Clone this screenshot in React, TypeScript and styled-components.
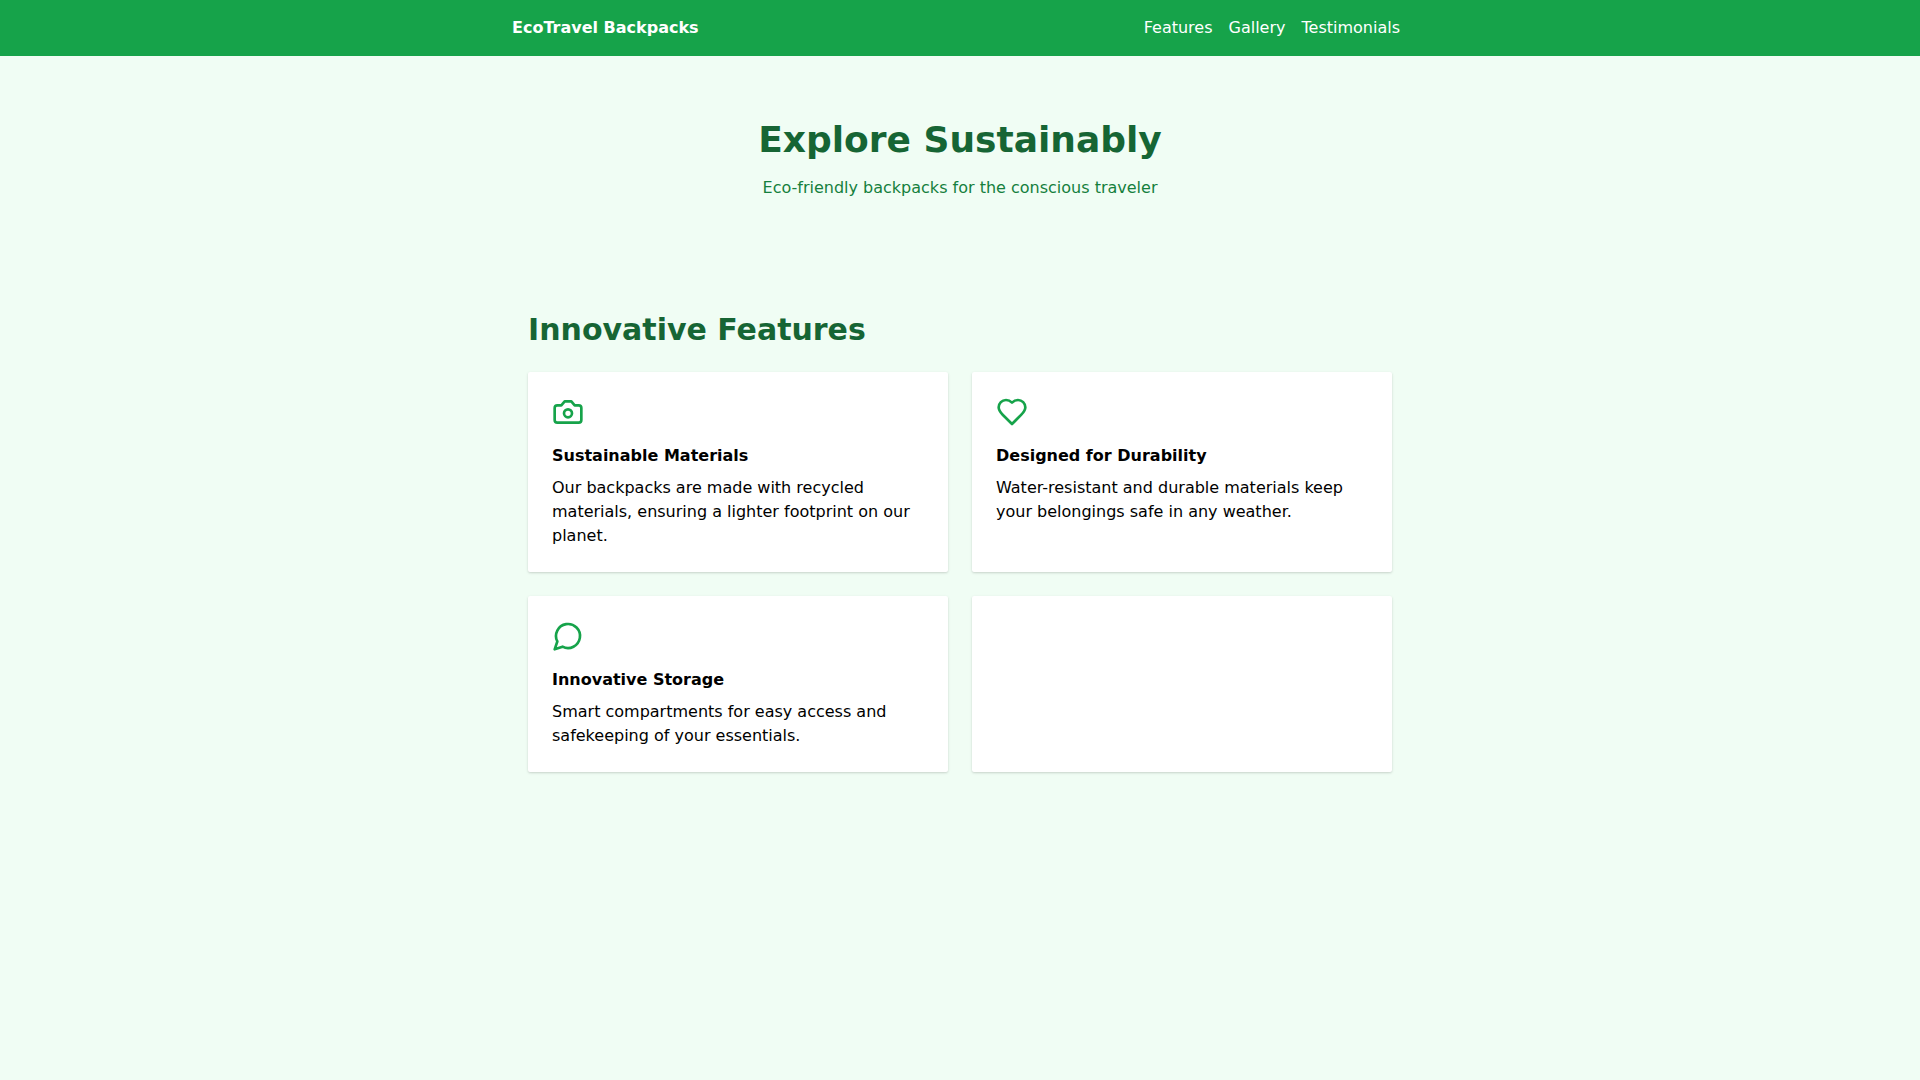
import styled, { createGlobalStyle } from 'styled-components';

const GlobalStyle = createGlobalStyle`
  * {
    box-sizing: border-box;
  }
  body {
    margin: 0;
    background: #f0fdf4;
    font-family: 'DejaVu Sans', sans-serif;
    font-size: 16px;
    line-height: 24px;
    color: #000;
  }
`;

const Page = styled.div`
  min-height: 100vh;
`;

const TopBar = styled.nav`
  height: 56px;
  background: #16a34a;
  color: #fff;
`;

const TopBarInner = styled.div`
  width: 896px;
  height: 100%;
  margin: 0 auto;
  display: flex;
  justify-content: space-between;
  align-items: center;
`;

const Brand = styled.a`
  font-weight: 700;
`;

const NavLinks = styled.div`
  display: flex;
`;

const NavLink = styled.a`
  padding: 0 8px;
`;

const Hero = styled.header`
  padding: 64px 0;
  text-align: center;
  h1 {
    margin: 0 0 16px;
    font-size: 36px;
    line-height: 40px;
    font-weight: 700;
    color: #166534;
  }
  p {
    margin: 0;
    color: #15803d;
  }
`;

const Features = styled.section`
  width: 864px;
  margin: 0 auto;
  padding: 48px 0;
  h2 {
    margin: 0 0 24px;
    font-size: 30px;
    line-height: 36px;
    font-weight: 700;
    color: #166534;
  }
`;

const CardGrid = styled.div`
  display: grid;
  grid-template-columns: 1fr 1fr;
  gap: 24px;
`;

const Card = styled.article`
  padding: 24px;
  background: #fff;
  border-radius: 2px;
  box-shadow: 0 1px 3px rgba(0, 0, 0, 0.12), 0 1px 2px rgba(0, 0, 0, 0.06);
  h3 {
    margin: 0 0 8px;
    font-size: 16px;
    line-height: 24px;
    font-weight: 700;
  }
  p {
    margin: 0;
  }
`;

const IconSvg = styled.svg`
  display: block;
  width: 32px;
  height: 32px;
  margin-bottom: 16px;
  fill: none;
  stroke: #16a34a;
  stroke-width: 2;
  stroke-linecap: round;
  stroke-linejoin: round;
`;

const CameraIcon = () => (
  <IconSvg viewBox="0 0 24 24">
    <path d="M14.5 4h-5L7 7H4a2 2 0 0 0-2 2v9a2 2 0 0 0 2 2h16a2 2 0 0 0 2-2V9a2 2 0 0 0-2-2h-3l-2.5-3z" />
    <circle cx="12" cy="13" r="3" />
  </IconSvg>
);

const HeartIcon = () => (
  <IconSvg viewBox="0 0 24 24">
    <path d="M19 14c1.49-1.46 3-3.21 3-5.5A5.5 5.5 0 0 0 16.5 3c-1.76 0-3 .5-4.5 2-1.5-1.5-2.74-2-4.5-2A5.5 5.5 0 0 0 2 8.5c0 2.3 1.5 4.05 3 5.5l7 7Z" />
  </IconSvg>
);

const BubbleIcon = () => (
  <IconSvg viewBox="0 0 24 24">
    <path d="M7.9 20A9 9 0 1 0 4 16.1L2 22Z" />
  </IconSvg>
);

const features = [
  {
    icon: <CameraIcon />,
    title: 'Sustainable Materials',
    text: 'Our backpacks are made with recycled materials, ensuring a lighter footprint on our planet.',
  },
  {
    icon: <HeartIcon />,
    title: 'Designed for Durability',
    text: 'Water-resistant and durable materials keep your belongings safe in any weather.',
  },
  {
    icon: <BubbleIcon />,
    title: 'Innovative Storage',
    text: 'Smart compartments for easy access and safekeeping of your essentials.',
  },
];

export default function App() {
  return (
    <Page>
      <GlobalStyle />
      <TopBar>
        <TopBarInner>
          <Brand>EcoTravel Backpacks</Brand>
          <NavLinks>
            <NavLink>Features</NavLink>
            <NavLink>Gallery</NavLink>
            <NavLink>Testimonials</NavLink>
          </NavLinks>
        </TopBarInner>
      </TopBar>
      <Hero>
        <h1>Explore Sustainably</h1>
        <p>Eco-friendly backpacks for the conscious traveler</p>
      </Hero>
      <Features>
        <h2>Innovative Features</h2>
        <CardGrid>
          {features.map((f) => (
            <Card key={f.title}>
              {f.icon}
              <h3>{f.title}</h3>
              <p>{f.text}</p>
            </Card>
          ))}
          <Card />
        </CardGrid>
      </Features>
    </Page>
  );
}
